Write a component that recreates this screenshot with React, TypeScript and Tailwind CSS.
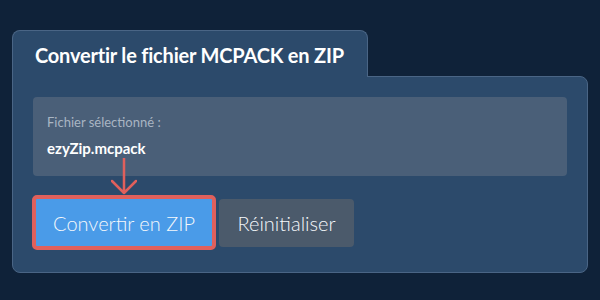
import React from 'react';

export default function App() {
  return (
    <div className="w-[600px] h-[300px] bg-[#0f2239] pt-[30px] px-3 font-['Lato','Noto_Sans',sans-serif] text-white">
      <div className="relative z-10 -mb-px w-[356px] h-[47px] bg-[#2c4a6b] border border-b-0 border-[#4a6585] rounded-t-lg pl-[22px] pt-[12px]">
        <h1 className="text-[20px] font-bold leading-6 tracking-[-0.2px]">Convertir le fichier MCPACK en ZIP</h1>
      </div>

      <div className="relative w-[576px] h-[197px] bg-[#2c4a6b] border border-[#4a6585] rounded-b-lg rounded-tr-lg px-5 pt-5">
        <div className="h-[79px] bg-[#4a5f78] rounded-[4px] pl-[14px] pt-[17px]">
          <div className="text-[13px] leading-4 text-[#a9b5c3]">Fichier sélectionné :</div>
          <div className="mt-[8px] text-[15px] font-bold leading-5">ezyZip.mcpack</div>
        </div>

        <div className="mt-[19px] flex items-center">
          <button className="w-[184px] h-[55px] -ml-px border-4 border-[#e0605c] rounded-[5px] bg-[#4a9be8] text-[20px] font-light text-[#f5f8fb]">
            Convertir en ZIP
          </button>
          <button className="ml-[3px] w-[135px] h-[48px] rounded-[4px] bg-[#4b5a6b] text-[20px] font-light text-[#f5f8fb]">
            Réinitialiser
          </button>
        </div>

        {/* annotation arrow pointing at the convert button */}
        <svg className="absolute left-[98px] top-[81px]" width="26" height="38" viewBox="0 0 26 38" fill="none">
          <path d="M13 0 V35 M1 23 L13 35 L25 23" stroke="#e0605c" strokeWidth="2.5" strokeLinecap="round" strokeLinejoin="round" />
        </svg>
      </div>
    </div>
  );
}
